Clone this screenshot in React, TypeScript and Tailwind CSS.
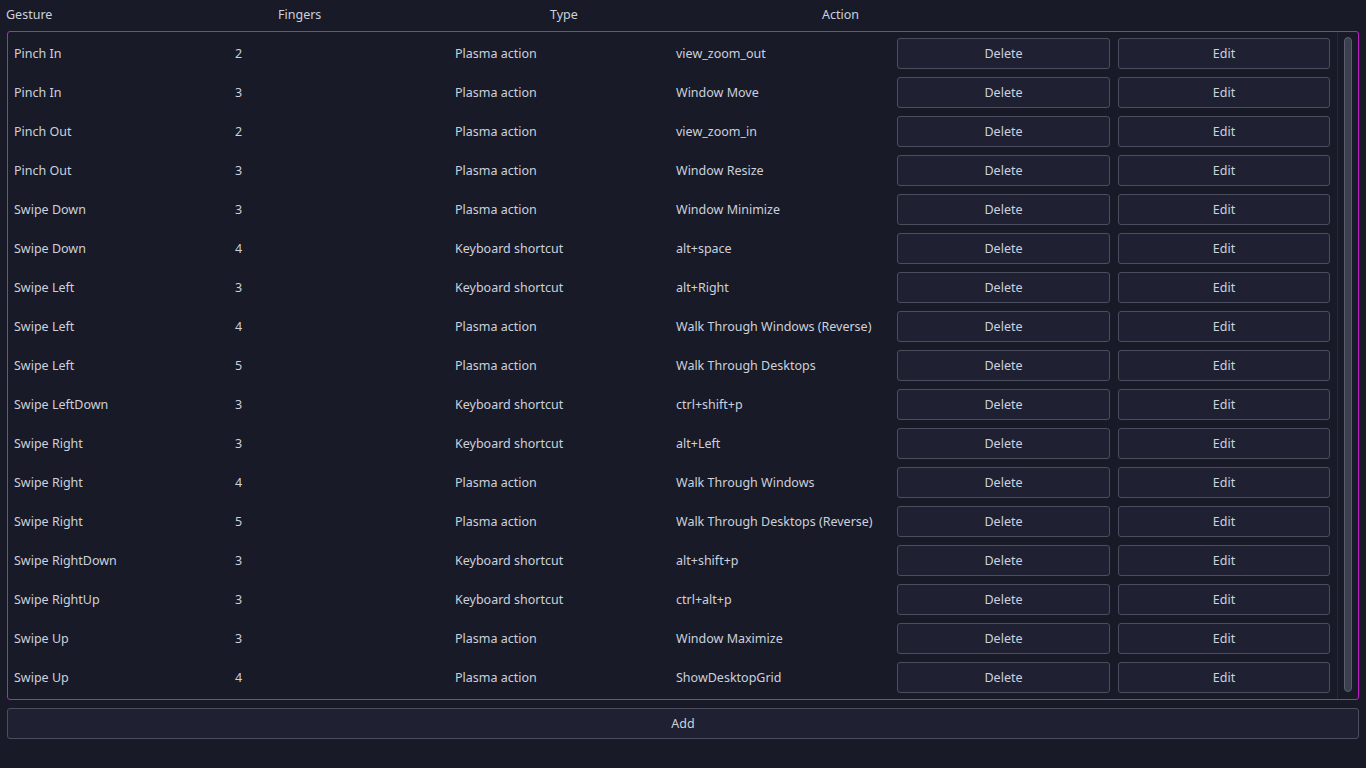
const gestures: [string, number, string, string][] = [
  ["Pinch In", 2, "Plasma action", "view_zoom_out"],
  ["Pinch In", 3, "Plasma action", "Window Move"],
  ["Pinch Out", 2, "Plasma action", "view_zoom_in"],
  ["Pinch Out", 3, "Plasma action", "Window Resize"],
  ["Swipe Down", 3, "Plasma action", "Window Minimize"],
  ["Swipe Down", 4, "Keyboard shortcut", "alt+space"],
  ["Swipe Left", 3, "Keyboard shortcut", "alt+Right"],
  ["Swipe Left", 4, "Plasma action", "Walk Through Windows (Reverse)"],
  ["Swipe Left", 5, "Plasma action", "Walk Through Desktops"],
  ["Swipe LeftDown", 3, "Keyboard shortcut", "ctrl+shift+p"],
  ["Swipe Right", 3, "Keyboard shortcut", "alt+Left"],
  ["Swipe Right", 4, "Plasma action", "Walk Through Windows"],
  ["Swipe Right", 5, "Plasma action", "Walk Through Desktops (Reverse)"],
  ["Swipe RightDown", 3, "Keyboard shortcut", "alt+shift+p"],
  ["Swipe RightUp", 3, "Keyboard shortcut", "ctrl+alt+p"],
  ["Swipe Up", 3, "Plasma action", "Window Maximize"],
  ["Swipe Up", 4, "Plasma action", "ShowDesktopGrid"],
];

const btn =
  "h-[31px] rounded-[3px] border border-[#4b4e5e] bg-[#1f2133] pt-[2px] text-[12.5px] text-[#cbd1de]";
const cell = "flex h-[31px] items-center pt-[2px]";

export default function App() {
  return (
    <div
      className="flex h-[768px] w-[1366px] flex-col bg-[#181a27] text-[12.5px] text-[#cbd1de]"
      style={{ fontFamily: '"Noto Sans", "Open Sans", sans-serif' }}
    >
      <div className="grid h-[31px] grid-cols-[272px_272px_272px_272px] items-center pl-[6px]">
        <span>Gesture</span>
        <span>Fingers</span>
        <span>Type</span>
        <span>Action</span>
      </div>

      <div className="mx-[7px] flex h-[669px] rounded-[3px] border border-[#c01cc8]">
        <div className="flex-1 pl-[5px] pt-[6px]">
          <div className="grid grid-cols-[221px_221px_221px_221px_221px_212px] gap-y-[8px]">
            {gestures.map(([name, fingers, type, action], i) => (
              <div key={i} className="contents">
                <span className={`${cell} pl-[1px]`}>{name}</span>
                <span className={`${cell} pl-[1px]`}>{fingers}</span>
                <span className={cell}>{type}</span>
                <span className={cell}>{action}</span>
                <button className={`${btn} w-[213px]`}>Delete</button>
                <button className={`${btn} w-[212px]`}>Edit</button>
              </div>
            ))}
          </div>
        </div>
        <div className="flex w-[21px] shrink-0 justify-center border-l border-[#262939] pb-[7px] pt-[5px]">
          <div className="w-[8px] rounded-full border border-[#5a5d6c] bg-[#3c3f4e]" />
        </div>
      </div>

      <button className={`${btn} mx-[7px] mt-[8px]`}>Add</button>
    </div>
  );
}
